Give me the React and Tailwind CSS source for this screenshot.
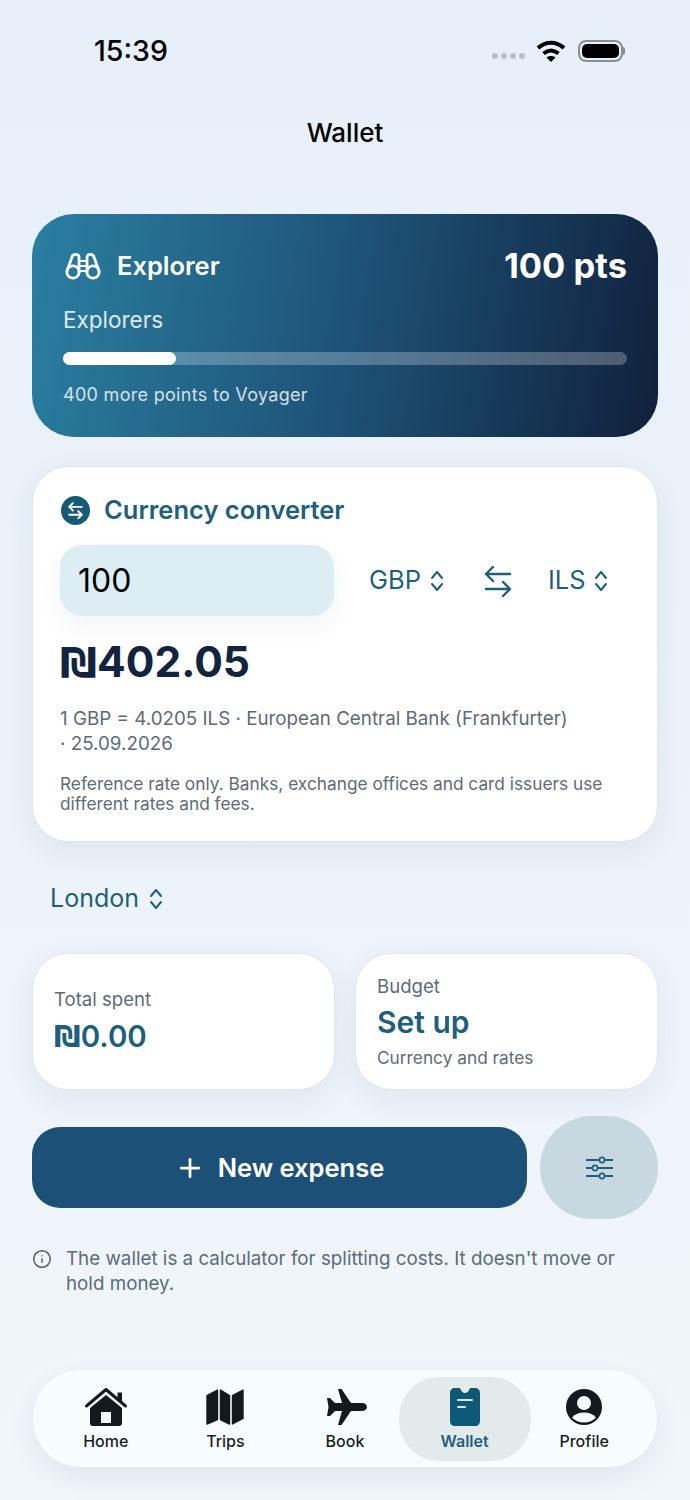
import { Plus, Info } from 'lucide-react'

const Updown = ({ className = '' }) => (
  <svg viewBox="0 0 14 24" className={className} fill="none" stroke="currentColor" strokeWidth="2" strokeLinecap="round" strokeLinejoin="round">
    <path d="M2 9l5-6 5 6" />
    <path d="M2 15l5 6 5-6" />
  </svg>
)

const Swap = ({ className = '', width = 2.4 }) => (
  <svg viewBox="0 0 28 32" className={className} fill="none" stroke="currentColor" strokeWidth={width} strokeLinecap="round" strokeLinejoin="round">
    <path d="M9 2L2 9l7 7M2 9h24" />
    <path d="M19 17l7 7-7 7M26 24H2" />
  </svg>
)

const Binoculars = () => (
  <svg viewBox="0 0 36 28" className="w-[36px] h-[28px]" fill="none" stroke="white" strokeWidth="2.8" strokeLinecap="round" strokeLinejoin="round">
    <circle cx="8" cy="20" r="6.2" />
    <circle cx="28" cy="20" r="6.200" />
    <path d="M2 19L7 5C8 1.500 13.500 1.500 14 5v15" />
    <path d="M34 19L29 5C28 1.500 22.500 1.500 22 5v15" />
    <path d="M14 9h8M14 14h8M14 19h8" strokeWidth="2" />
  </svg>
)

const Sliders = () => (
  <svg viewBox="0 0 28 24" className="w-[28px] h-[24px]" fill="none" stroke="#1e5f7e" strokeWidth="2">
    <path d="M1 4h27M1 12h27M1 20h27" />
    <circle cx="17" cy="4" r="2.6" fill="#c8d8e1" strokeWidth="1.6" />
    <circle cx="10" cy="12" r="2.6" fill="#c8d8e1" strokeWidth="1.6" />
    <circle cx="17" cy="20" r="2.6" fill="#c8d8e1" strokeWidth="1.6" />
  </svg>
)

const HomeIcon = () => (
  <svg viewBox="0 0 44 40" className="w-[44px] h-[40px]" fill="#121a1d">
    <path d="M22 8L6 21v15a3 3 0 0 0 3 3h26a3 3 0 0 0 3-3V21L22 8zM17 25h10v11H17V25z" fillRule="evenodd" />
    <path d="M2.500 19L22 2.500 41.500 19" fill="none" stroke="#121a1d" strokeWidth="3" strokeLinecap="round" strokeLinejoin="round" />
    <path d="M33.500 5.500h4.500v9l-4.500-4z" />
  </svg>
)

const TripsIcon = () => (
  <svg viewBox="0 0 38 36" className="w-[38px] h-[36px]" fill="#121a1d" stroke="#121a1d" strokeWidth="1.4" strokeLinejoin="round">
    <path d="M1 6.500L11.500 1v29.500L1 35z" />
    <path d="M14.500 1L23.500 6.500V35L14.500 30.500z" />
    <path d="M26.500 6.500L37 1v28.500L26.500 35z" />
  </svg>
)

const PlaneIcon = () => (
  <svg viewBox="0 0 40 36" className="w-[40px] h-[36px] ml-[4px]" fill="#121a1d">
    <path d="M11 0h3.500L24 14h11c3 0 5 2 5 4s-2 4-5 4H24l-9.500 14H11l4-14H8l-5 5H0l1.500-9L0 9h3l5 5h7L11 0z" />
  </svg>
)

const WalletIcon = () => (
  <svg viewBox="0 0 30 38" className="w-[30px] h-[38px]">
    <path d="M5 0h4c1 0 1.400.6 1.800 1.600C11.500 4 13 5 15 5s3.500-1 4.200-3.400C19.600.6 20 0 21 0h4c3 0 5 2 5 5v28c0 3-2 5-5 5H5c-3 0-5-2-5-5V5c0-3 2-5 5-5z" fill="#0e5878" />
    <path d="M8 12h14M8 19h7" stroke="#fff" strokeWidth="2" strokeLinecap="round" opacity="0.85" />
  </svg>
)

const ProfileIcon = () => (
  <svg viewBox="0 0 36 36" className="w-[36px] h-[36px]">
    <circle cx="18" cy="18" r="18" fill="#121a1d" />
    <circle cx="18" cy="14" r="7" fill="#f7fdff" />
    <path d="M6 28.500c3-3.500 7-5 12-5s9 1.500 12 5c-3 3.500-7.500 5-12 5s-9-1.500-12-5z" fill="#f7fdff" />
  </svg>
)

const tabs = [
  { label: 'Home', icon: <HomeIcon /> },
  { label: 'Trips', icon: <TripsIcon /> },
  { label: 'Book', icon: <PlaneIcon /> },
  { label: 'Wallet', icon: <WalletIcon />, active: true },
  { label: 'Profile', icon: <ProfileIcon /> },
]

const shadow = 'shadow-[0_10px_30px_rgba(30,60,90,0.07)]'

export default function App() {
  return (
    <div className="w-[690px] h-[1500px] bg-gradient-to-b from-[#e7eff9] to-[#f1f6fa] font-['Inter',sans-serif] overflow-hidden flex flex-col px-[32px]">
      {/* status bar */}
      <div className="h-[105px] shrink-0 flex items-start justify-between pt-[34px] pl-[62px] pr-[33px]">
        <span className="text-[28.5px] leading-[34px] font-medium text-black">15:39</span>
        <div className="flex items-center gap-[11px] mt-[5px]">
          <div className="flex gap-[2.500px] mt-[10px]">
            <span className="w-[6.500px] h-[6.500px] rounded-full bg-[#b8bec6]" />
            <span className="w-[6.500px] h-[6.500px] rounded-full bg-[#b8bec6]" />
            <span className="w-[6.500px] h-[6.500px] rounded-full bg-[#b8bec6]" />
            <span className="w-[6.500px] h-[6.500px] rounded-full bg-[#b8bec6]" />
          </div>
          <svg viewBox="0 0 30 24" className="w-[30px] h-[24px]" fill="none" stroke="black" strokeWidth="4">
            <path d="M2 9c8-7 18-7 26 0" />
            <path d="M7.500 14.500c5-4 10-4 15 0" />
            <path d="M15 23l-4.500-4.500c2.500-2 6.500-2 9 0z" fill="black" stroke="none" />
          </svg>
          <div className="flex items-center ml-[1px]">
            <div className="w-[45px] h-[22px] rounded-[8px] border-2 border-[#8a8e94] p-[2px]">
              <div className="w-full h-full rounded-[5px] bg-black" />
            </div>
            <div className="w-[2px] h-[8px] rounded-r-full bg-[#8a8e94]" />
          </div>
        </div>
      </div>

      <h1 className="h-[54px] shrink-0 flex items-center justify-center text-[26px] font-medium text-black">Wallet</h1>

      {/* level card */}
      <div className="mt-[55px] h-[223px] shrink-0 rounded-[42px] bg-[linear-gradient(100deg,#2a7fa1_0%,#1e5378_50%,#10213c_100%)] px-[31px] pt-[30px]">
        <div className="flex items-center justify-between h-[44px]">
          <div className="flex items-center gap-[16px] pl-[2px]">
            <Binoculars />
            <span className="text-[25.5px] font-semibold text-white">Explorer</span>
          </div>
          <span className="text-[34.5px] font-bold text-white">100 pts</span>
        </div>
        <p className="mt-[17px] text-[22.5px] leading-[30px] text-white/85">Explorers</p>
        <div className="mt-[17px] h-[13px] rounded-full bg-white/25">
          <div className="h-full w-[20%] rounded-full bg-white" />
        </div>
        <p className="mt-[17px] text-[18px] leading-[26px] tracking-[0.3px] text-white/80">400 more points to Voyager</p>
      </div>

      {/* converter */}
      <div className={`mt-[29px] h-[376px] shrink-0 rounded-[36px] bg-white border border-[#dfe6ec] px-[27px] pt-[27px] ${shadow}`}>
        <div className="flex items-center gap-[14px] h-[32px]">
          <div className="w-[29px] h-[29px] ml-[1px] rounded-full bg-[#175a78] flex items-center justify-center">
            <Swap className="w-[15px] h-[17px] text-white" width={3.4} />
          </div>
          <span className="text-[25.5px] font-semibold text-[#1f5f7e]">Currency converter</span>
        </div>
        <div className="flex items-center mt-[19px]">
          <div className="w-[274px] h-[71px] rounded-[22px] bg-[#dcedf4] flex items-center pl-[18px] text-[32px] text-black shadow-[0_10px_24px_rgba(30,60,90,0.06)]">100</div>
          <div className="flex items-center gap-[8px] ml-[35px] text-[25.5px] text-[#1f5f7e]">
            GBP
            <Updown className="w-[16px] h-[24px]" />
          </div>
          <Swap className="w-[28px] h-[32px] ml-[39px] text-[#1f5f7e]" />
          <div className="flex items-center gap-[7px] ml-[36px] text-[25.5px] text-[#1f5f7e]">
            ILS
            <Updown className="w-[16px] h-[24px]" />
          </div>
        </div>
        <p className="mt-[18px] text-[42.5px] leading-[56px] font-bold text-[#13243f]"><span className="font-['DejaVu_Sans'] text-[41px]">₪</span>402.05</p>
        <p className="mt-[15px] text-[18.8px] leading-[25px] text-[#5c6b7a]">1 GBP = 4.0205 ILS · European Central Bank (Frankfurter)<br />· 25.09.2026</p>
        <p className="mt-[18px] text-[17.3px] leading-[20px] text-[#5c6b7a]">Reference rate only. Banks, exchange offices and card issuers use different rates and fees.</p>
      </div>

      <div className="mt-[39px] h-[36px] shrink-0 flex items-center gap-[9px] pl-[18px] text-[25px] text-[#1f5f7e]">
        London
        <Updown className="w-[16px] h-[24px]" />
      </div>

      {/* summary */}
      <div className="mt-[36px] grid grid-cols-2 gap-[20px] shrink-0">
        <div className={`h-[137px] rounded-[36px] bg-white border border-[#dfe6ec] pl-[21px] flex flex-col justify-center ${shadow}`}>
          <p className="text-[18.6px] leading-[24px] text-[#5c6b7a]">Total spent</p>
          <p className="mt-[5px] text-[29.5px] leading-[40px] font-semibold text-[#1f5f7e]"><span className="font-['DejaVu_Sans']">₪</span>0.00</p>
        </div>
        <div className={`h-[137px] rounded-[36px] bg-white border border-[#dfe6ec] pl-[21px] flex flex-col justify-center ${shadow}`}>
          <p className="text-[18.6px] leading-[24px] text-[#5c6b7a]">Budget</p>
          <p className="mt-[2px] text-[30px] leading-[44px] font-semibold text-[#1f5f7e]">Set up</p>
          <p className="mt-[2px] text-[17.3px] leading-[24px] text-[#5c6b7a]">Currency and rates</p>
        </div>
      </div>

      {/* actions */}
      <div className="mt-[26px] flex items-center gap-[13px] shrink-0">
        <button className="w-[495px] h-[81px] rounded-[28px] bg-[#1d5076] text-white flex items-center justify-center gap-[13px] text-[25.5px] font-semibold">
          <Plus className="w-[30px] h-[30px]" strokeWidth={2.2} />
          <span className="mt-[1px]">New expense</span>
        </button>
        <button className="w-[118px] h-[103px] rounded-full bg-[#c8d8e1] flex items-center justify-center">
          <Sliders />
        </button>
      </div>

      <div className="mt-[27px] flex items-start gap-[14px] shrink-0">
        <Info className="w-[20px] h-[20px] mt-[3px] shrink-0 text-[#4f5e6d]" strokeWidth={1.8} />
        <p className="text-[18.8px] leading-[25px] text-[#5c6b7a]">The wallet is a calculator for splitting costs. It doesn't move or hold money.</p>
      </div>

      {/* tab bar */}
      <nav className="mt-[74px] h-[97px] mx-[1px] shrink-0 rounded-[48px] bg-[#f7fdff] flex items-center px-[13px] shadow-[0_10px_30px_rgba(30,60,90,0.08)]">
        {tabs.map((t) => (
          <div key={t.label} className="w-[119.6px] shrink-0 flex justify-center">
            <div className={`w-[132px] shrink-0 h-[84px] rounded-[40px] flex flex-col items-center justify-end pb-[9px] ${t.active ? 'bg-[#e3eaec]' : ''}`}>
              <div className="h-[42px] flex items-center justify-center">{t.icon}</div>
              <span className={`mt-[2px] text-[16px] leading-[22px] font-medium ${t.active ? 'text-[#1f5f7e] font-semibold' : 'text-[#181f24]'}`}>{t.label}</span>
            </div>
          </div>
        ))}
      </nav>
    </div>
  )
}
